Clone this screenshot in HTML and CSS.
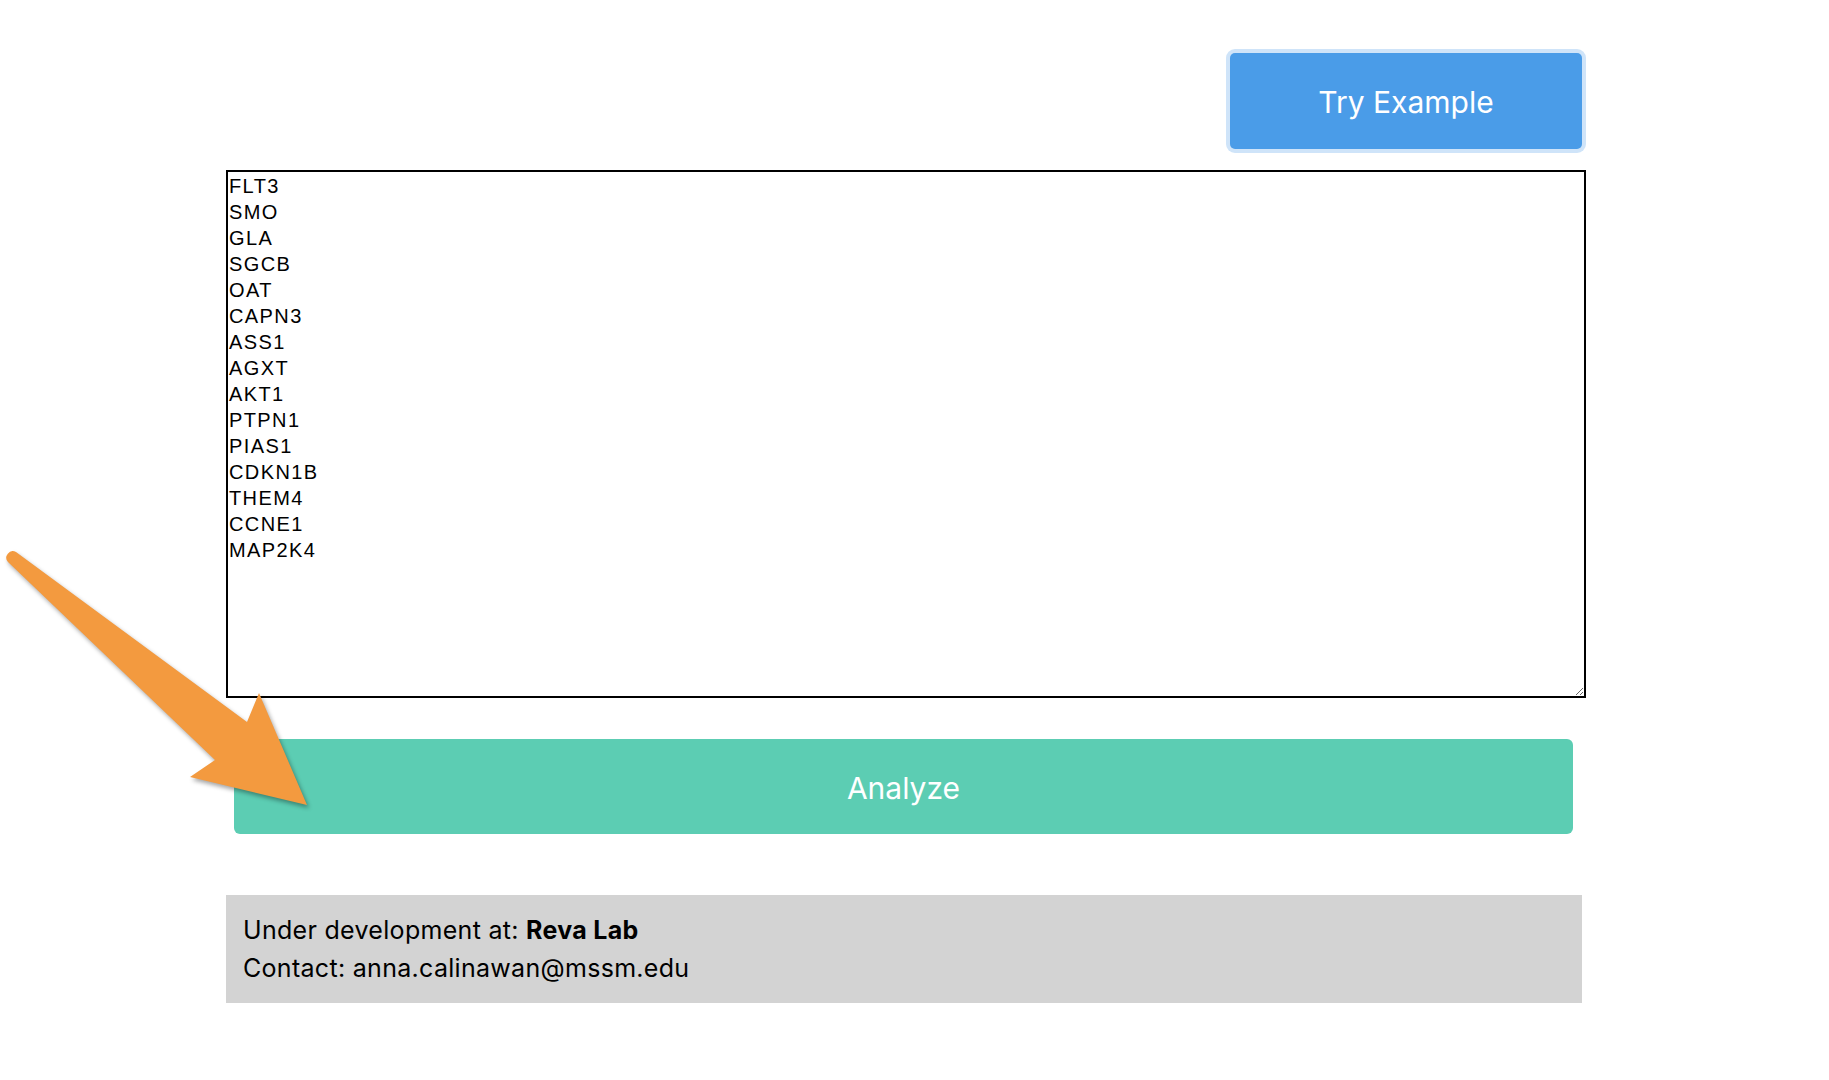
FILE: index.html
```html
<!DOCTYPE html>
<html>
<head>
<meta charset="utf-8">
<link rel="stylesheet" href="styles.css">
</head>
<body>
<main class="page">
  <div class="toolbar">
    <button class="btn-example">Try Example</button>
  </div>
  <textarea class="genes" spellcheck="false">FLT3
SMO
GLA
SGCB
OAT
CAPN3
ASS1
AGXT
AKT1
PTPN1
PIAS1
CDKN1B
THEM4
CCNE1
MAP2K4</textarea>
  <button class="btn-analyze">Analyze</button>
  <footer class="info">
    <div>Under development at: <b>Reva Lab</b></div>
    <div>Contact: anna.calinawan@mssm.edu</div>
  </footer>
</main>
<svg class="arrow" width="330" height="830" viewBox="0 0 330 830">
  <path d="M16 552 L247 722 L259 693 L307 805 L190 777 L215 760 L8 562 A6.5 6.5 0 0 1 16 552 Z" fill="#f39a3f"/>
</svg>
</body>
</html>
```

FILE: styles.css
```css
html, body {
  margin: 0;
  padding: 0;
  background: #ffffff;
}
body {
  font-family: Inter, "Noto Sans", sans-serif;
  position: relative;
  min-height: 1080px;
}
.page {
  width: 1360px;
  margin-left: 226px;
  padding-top: 53px;
  display: flex;
  flex-direction: column;
}
.toolbar {
  display: flex;
  justify-content: flex-end;
  padding-right: 4px;
}
.btn-example {
  width: 352px;
  height: 96px;
  background: #4a9ce8;
  color: #ffffff;
  border: none;
  border-radius: 5px;
  box-shadow: 0 0 0 4px #cfe4f9;
  font-family: Inter, sans-serif;
  font-size: 30px;
  font-weight: 400;
  padding: 2px 0 0;
}
.genes {
  margin-top: 21px;
  width: 1360px;
  height: 528px;
  box-sizing: border-box;
  border: 2px solid #000;
  padding: 1px 1px 0;
  font-family: "Liberation Sans", Arial, sans-serif;
  font-size: 20px;
  letter-spacing: 1.4px;
  line-height: 26px;
  color: #000;
  resize: both;
  outline: none;
}
.btn-analyze {
  margin-top: 41px;
  margin-left: 8px;
  width: 1339px;
  height: 95px;
  background: #5ccdb3;
  color: #ffffff;
  border: none;
  border-radius: 6px;
  font-family: Inter, sans-serif;
  font-size: 30px;
  padding: 2px 0 0;
}
.info {
  margin-top: 61px;
  width: 1356px;
  height: 108px;
  box-sizing: border-box;
  background: #d3d3d3;
  padding: 16px 17px 0;
  font-size: 25px;
  letter-spacing: 0.3px;
  line-height: 38px;
  color: #000;
}
.info b {
  font-weight: 700;
}
.arrow {
  position: absolute;
  left: 0;
  top: 0;
  filter: drop-shadow(2px 3px 2px rgba(0,0,0,0.35));
  pointer-events: none;
}
```
